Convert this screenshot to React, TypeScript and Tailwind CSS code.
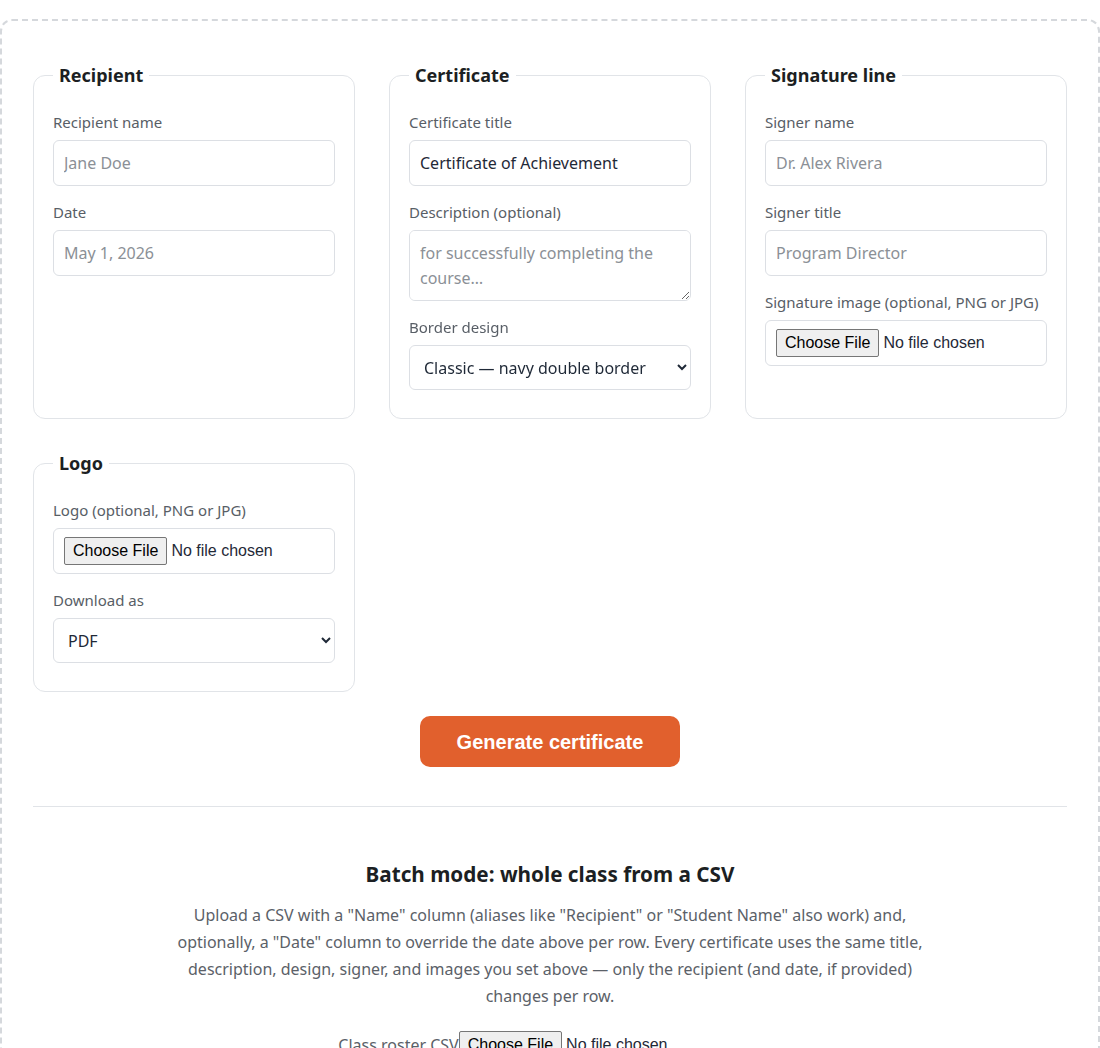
import React from "react";

const field = "w-full h-[46px] rounded-[6px] border border-[#dcdfe4] bg-white px-[10px] text-[16px] text-[#1f2937] placeholder:text-[#8b9096] outline-none";
const label = "block text-[15px] leading-[22px] text-[#585e66] mb-[7px]";
const fs = "min-w-0 rounded-[12px] border border-[#e1e4e8] px-[19px] pt-[24px] pb-[28px]";
const lg = "px-[6px] text-[18px] leading-[24px] font-bold text-[#1c1f23]";
const fileCls = "text-[16px] text-[#1f2937] [font-family:'Liberation_Sans',Arial,sans-serif] file:mr-[4px] file:px-[8px] file:py-[1px] file:border file:border-[#767676] file:rounded-[2px] file:bg-[#efefef] file:text-[16px] file:text-black file:[font-family:'Liberation_Sans',Arial,sans-serif]";

function FileBox() {
  return (
    <div className="h-[46px] rounded-[6px] border border-[#dcdfe4] px-[10px] flex items-center">
      <input type="file" className={fileCls} />
    </div>
  );
}

export default function App() {
  return (
    <div className="bg-white min-h-[1048px] pt-[19px] [font-family:'Noto_Sans',sans-serif]">
      <div className="rounded-[12px] border-2 border-dashed border-[#d5d8dc] px-[31px] pt-[42px] pb-[40px]">
        <div className="grid grid-cols-3 gap-x-[34px] gap-y-[32px]">
          <fieldset className={fs}>
            <legend className={lg}>Recipient</legend>
            <div className="flex flex-col gap-[15px]">
              <div>
                <label className={label}>Recipient name</label>
                <input className={field} placeholder="Jane Doe" />
              </div>
              <div>
                <label className={label}>Date</label>
                <input className={field} placeholder="May 1, 2026" />
              </div>
            </div>
          </fieldset>
          <fieldset className={fs}>
            <legend className={lg}>Certificate</legend>
            <div className="flex flex-col gap-[15px]">
              <div>
                <label className={label}>Certificate title</label>
                <input className={field} defaultValue="Certificate of Achievement" />
              </div>
              <div>
                <label className={label}>Description (optional)</label>
                <textarea className="block w-full h-[71px] rounded-[6px] border border-[#dcdfe4] bg-white px-[10px] py-[10px] text-[16px] leading-[25px] text-[#1f2937] placeholder:text-[#8b9096] outline-none" placeholder="for successfully completing the course…" />
              </div>
              <div>
                <label className={label}>Border design</label>
                <select className="w-full h-[45px] rounded-[6px] border border-[#dcdfe4] bg-white px-[10px] text-[16px] text-[#1f2937] outline-none" defaultValue="classic">
                  <option value="classic">Classic — navy double border</option>
                </select>
              </div>
            </div>
          </fieldset>
          <fieldset className={fs}>
            <legend className={lg}>Signature line</legend>
            <div className="flex flex-col gap-[15px]">
              <div>
                <label className={label}>Signer name</label>
                <input className={field} placeholder="Dr. Alex Rivera" />
              </div>
              <div>
                <label className={label}>Signer title</label>
                <input className={field} placeholder="Program Director" />
              </div>
              <div>
                <label className={label}>Signature image (optional, PNG or JPG)</label>
                <FileBox />
              </div>
            </div>
          </fieldset>
          <fieldset className={fs}>
            <legend className={lg}>Logo</legend>
            <div className="flex flex-col gap-[15px]">
              <div>
                <label className={label}>Logo (optional, PNG or JPG)</label>
                <FileBox />
              </div>
              <div>
                <label className={label}>Download as</label>
                <select className="w-full h-[45px] rounded-[6px] border border-[#dcdfe4] bg-white px-[10px] text-[16px] text-[#1f2937] outline-none" defaultValue="pdf">
                  <option value="pdf">PDF</option>
                </select>
              </div>
            </div>
          </fieldset>
        </div>

        <div className="flex justify-center mt-[24px]">
          <button className="w-[260px] h-[51px] rounded-[10px] bg-[#e1602d] text-white text-[20px] font-bold [font-family:'Liberation_Sans',Arial,sans-serif]">
            Generate certificate
          </button>
        </div>

        <hr className="mt-[39px] border-0 border-t border-[#e1e4e8]" />

        <div className="pt-[53px] text-center">
          <h2 className="text-[20.7px] leading-[28px] font-bold text-[#1c1f23]">Batch mode: whole class from a CSV</h2>
          <p className="mx-auto mt-[14px] max-w-[752px] text-[16px] leading-[27px] text-[#5b6168]">
            Upload a CSV with a "Name" column (aliases like "Recipient" or "Student Name" also work) and, optionally, a "Date" column to override the date above per row. Every certificate uses the same title, description, design, signer, and images you set above — only the recipient (and date, if provided) changes per row.
          </p>
          <div className="mt-[21px] flex justify-center items-center text-[16px] text-[#5b6168]">
            <label>Class roster CSV</label>
            <input type="file" className={fileCls} />
          </div>
        </div>
      </div>
    </div>
  );
}
